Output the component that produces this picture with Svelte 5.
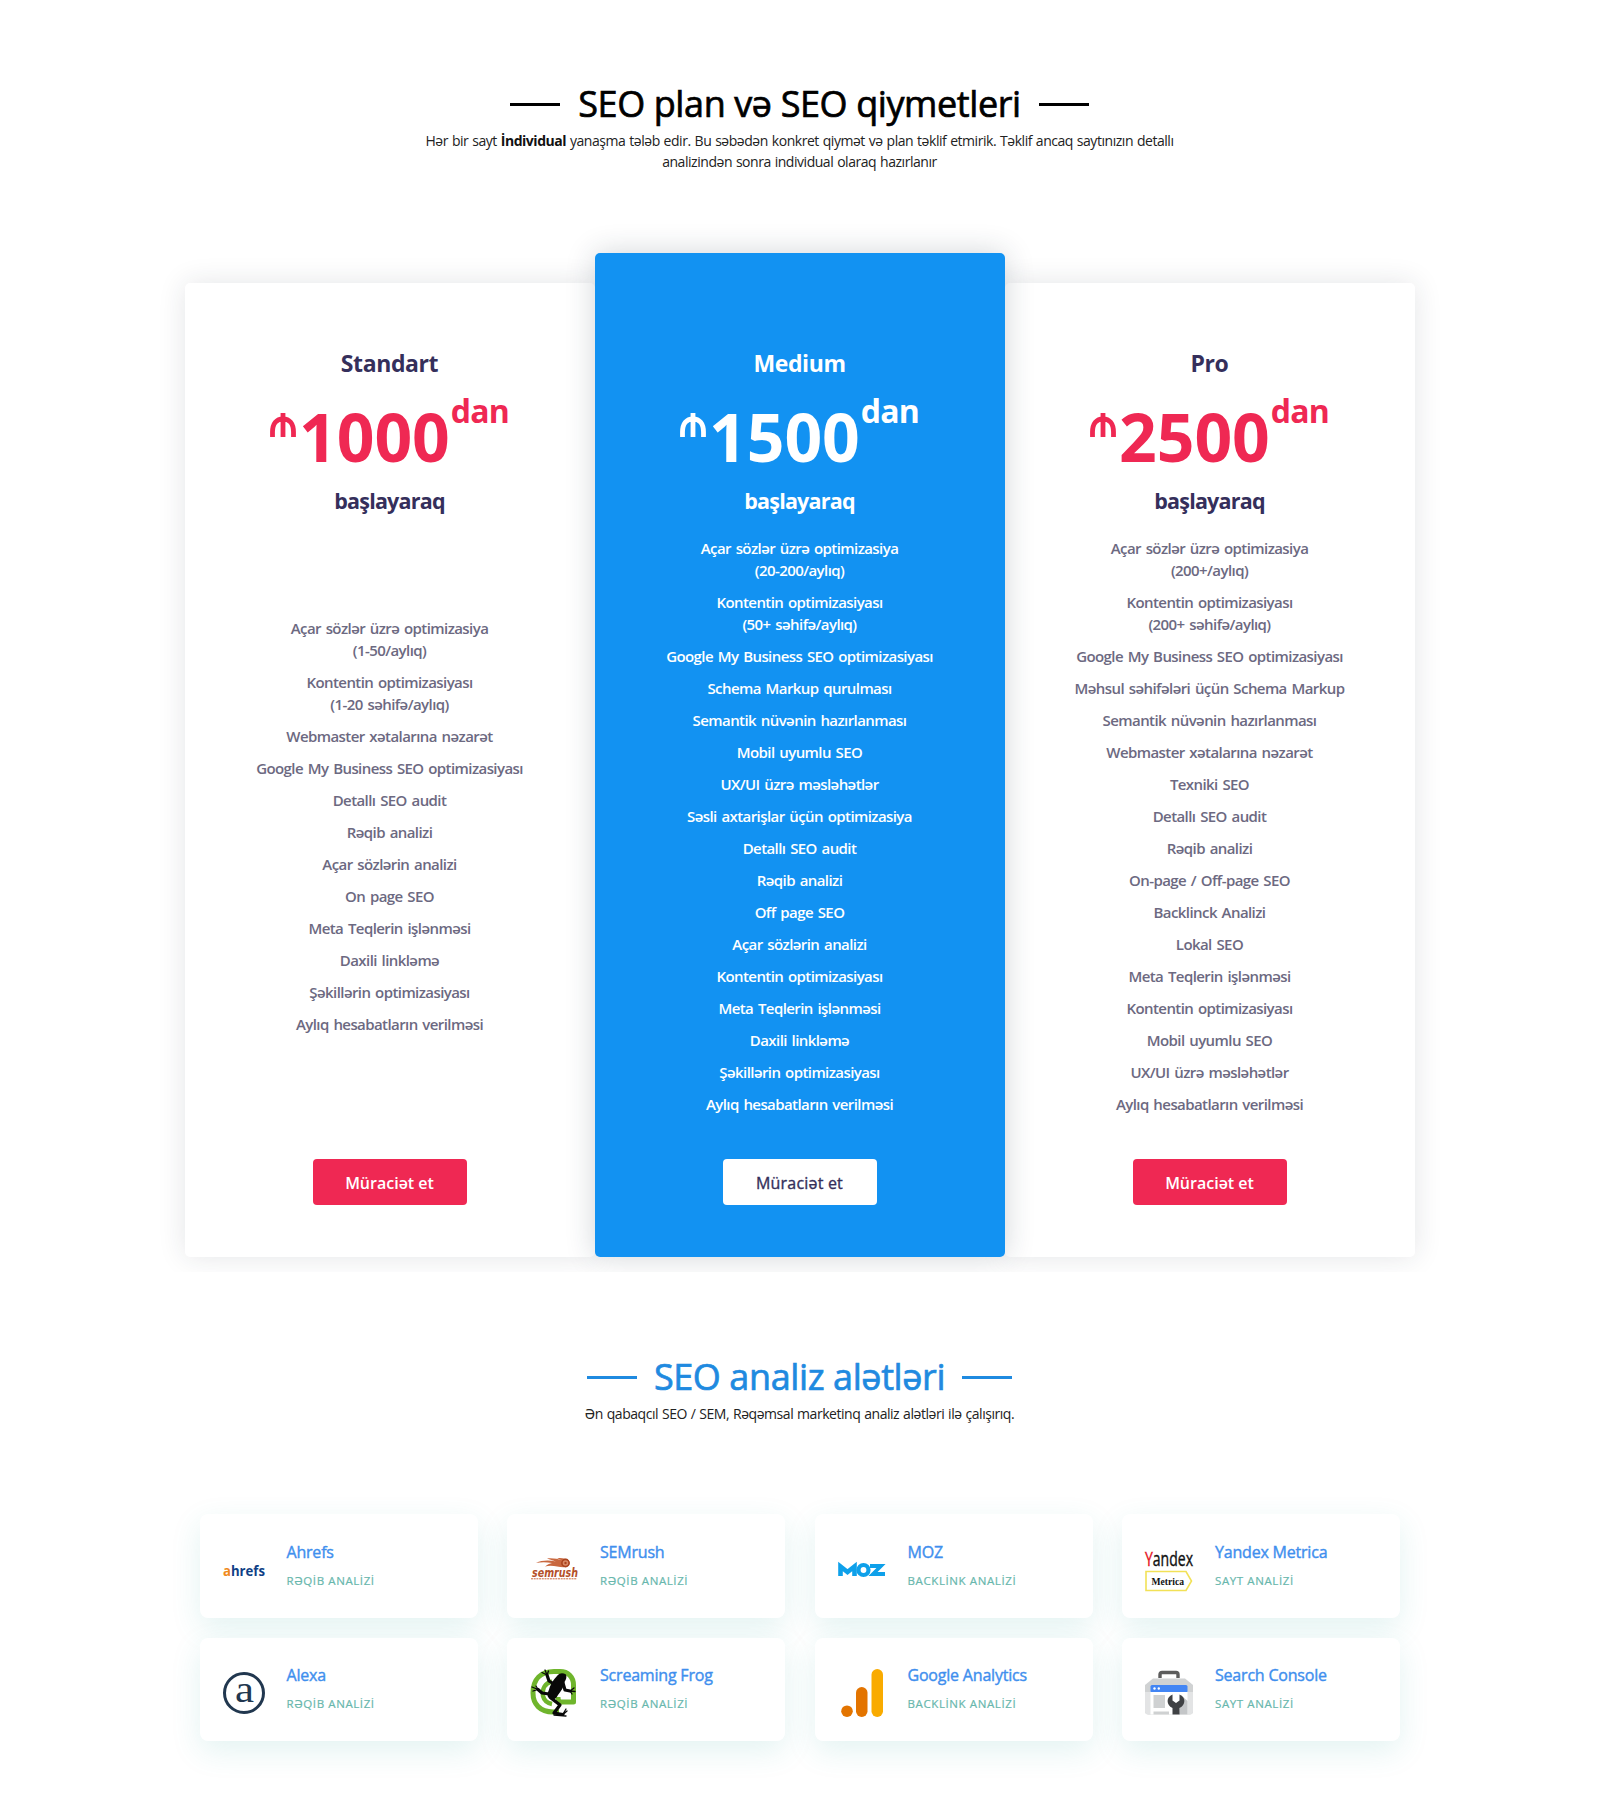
<script>
  const plans = [
    {
      name: 'Standart', price: '1000', kind: 'side',
      items: [
        ['Açar sözlər üzrə optimizasiya', '(1-50/aylıq)'], ['Kontentin optimizasiyası', '(1-20 səhifə/aylıq)'],
        ['Webmaster xətalarına nəzarət'], ['Google My Business SEO optimizasiyası'], ['Detallı SEO audit'],
        ['Rəqib analizi'], ['Açar sözlərin analizi'], ['On page SEO'], ['Meta Teqlerin işlənməsi'],
        ['Daxili linkləmə'], ['Şəkillərin optimizasiyası'], ['Aylıq hesabatların verilməsi']
      ]
    },
    {
      name: 'Medium', price: '1500', kind: 'featured',
      items: [
        ['Açar sözlər üzrə optimizasiya', '(20-200/aylıq)'], ['Kontentin optimizasiyası', '(50+ səhifə/aylıq)'],
        ['Google My Business SEO optimizasiyası'], ['Schema Markup qurulması'], ['Semantik nüvənin hazırlanması'],
        ['Mobil uyumlu SEO'], ['UX/UI üzrə məsləhətlər'], ['Səsli axtarişlar üçün optimizasiya'],
        ['Detallı SEO audit'], ['Rəqib analizi'], ['Off page SEO'], ['Açar sözlərin analizi'],
        ['Kontentin optimizasiyası'], ['Meta Teqlerin işlənməsi'], ['Daxili linkləmə'],
        ['Şəkillərin optimizasiyası'], ['Aylıq hesabatların verilməsi']
      ]
    },
    {
      name: 'Pro', price: '2500', kind: 'side',
      items: [
        ['Açar sözlər üzrə optimizasiya', '(200+/aylıq)'], ['Kontentin optimizasiyası', '(200+ səhifə/aylıq)'],
        ['Google My Business SEO optimizasiyası'], ['Məhsul səhifələri üçün Schema Markup'],
        ['Semantik nüvənin hazırlanması'], ['Webmaster xətalarına nəzarət'], ['Texniki SEO'],
        ['Detallı SEO audit'], ['Rəqib analizi'], ['On-page / Off-page SEO'], ['Backlinck Analizi'],
        ['Lokal SEO'], ['Meta Teqlerin işlənməsi'], ['Kontentin optimizasiyası'], ['Mobil uyumlu SEO'],
        ['UX/UI üzrə məsləhətlər'], ['Aylıq hesabatların verilməsi']
      ]
    }
  ];

  const tools = [
    { id: 'ahrefs', name: 'Ahrefs', note: 'RƏQİB ANALİZİ' },
    { id: 'semrush', name: 'SEMrush', note: 'RƏQİB ANALİZİ' },
    { id: 'moz', name: 'MOZ', note: 'BACKLİNK ANALİZİ' },
    { id: 'yandex', name: 'Yandex Metrica', note: 'SAYT ANALİZİ' },
    { id: 'alexa', name: 'Alexa', note: 'RƏQİB ANALİZİ' },
    { id: 'frog', name: 'Screaming Frog', note: 'RƏQİB ANALİZİ' },
    { id: 'analytics', name: 'Google Analytics', note: 'BACKLİNK ANALİZİ' },
    { id: 'console', name: 'Search Console', note: 'SAYT ANALİZİ' }
  ];
</script>

<main>
  <section class="pricing">
    <header class="intro">
      <h2><span>SEO plan və SEO qiymetleri</span></h2>
      <p>Hər bir sayt <b>İndividual</b> yanaşma tələb edir. Bu səbədən konkret qiymət və plan təklif etmirik. Təklif ancaq saytınızın detallı<br />analizindən sonra individual olaraq hazırlanır</p>
    </header>
    <div class="plans">
      {#each plans as plan}
        <article class="plan {plan.kind}">
          <h3>{plan.name}</h3>
          <div class="price">
            <svg class="manat" viewBox="0 0 26 24"><path d="M2.5 24V19C2.5 10.5 6.5 5.8 13 5.8S23.500 10.500 23.500 19V24M13 0V24" /></svg>
            <span class="amount">{plan.price}</span><span class="dan">dan</span>
          </div>
          <h4>başlayaraq</h4>
          <ul>
            {#each plan.items as lines}
              <li>{#each lines as line}<span>{line}</span>{/each}</li>
            {/each}
          </ul>
          <button>Müraciət et</button>
        </article>
      {/each}
    </div>
  </section>

  <section class="tools">
    <header class="intro blue">
      <h2><span>SEO analiz alətləri</span></h2>
      <p>Ən qabaqcıl SEO / SEM, Rəqəmsal marketinq analiz alətləri ilə çalışırıq.</p>
    </header>
    <div class="grid">
      {#each tools as tool}
        <article class="tool">
          {#if tool.id === 'ahrefs'}
            <svg width="42" height="48" viewBox="0 0 42 48"><text x="0" y="29.500" class="ahrefs" textLength="42" lengthAdjust="spacingAndGlyphs"><tspan fill="#f08a1c">a</tspan><tspan fill="#0f3f86">hrefs</tspan></text></svg>
          {:else if tool.id === 'semrush'}
            <svg width="48" height="48" viewBox="0 0 48 48">
              <path d="M6 17C12 14 19 14 26 15.500L17 12.500C23 12 28 13 32 14.500L27 12C31 12 34 12.500 37 13C41 15 40 20 36 21C29 22 23 18 15 20.500C18 18 20 17.500 22 17C16 16 11 16 6 17Z" fill="#c9683f" />
              <circle cx="35.500" cy="17" r="3.600" fill="#d98a66" stroke="#a9421d" stroke-width="1.600" /><circle cx="35.500" cy="17" r="1.200" fill="#a9421d" />
              <text x="2" y="30.500" class="semrush" textLength="46" lengthAdjust="spacingAndGlyphs">semrush</text>
              <path d="M1 32.800H47" stroke="#c9683f" stroke-width="1" stroke-dasharray="2 .7" />
            </svg>
          {:else if tool.id === 'moz'}
            <svg width="48" height="48" viewBox="0 0 48 48" fill="none" stroke="#0ea0ea">
              <path d="M2.500 30V20.500L9.500 26L16.500 20.500V30" stroke-width="4.600" />
              <circle cx="25.500" cy="24" r="5" stroke-width="4.200" />
              <path d="M32 20H43L35 28H47" stroke-width="3.800" />
            </svg>
          {:else if tool.id === 'yandex'}
            <svg width="48" height="48" viewBox="0 0 48 48">
              <text x="0" y="20" class="yandex" textLength="48" lengthAdjust="spacingAndGlyphs"><tspan fill="#e5131d" stroke="#e5131d">Y</tspan><tspan fill="#111" stroke="#111">andex</tspan></text>
              <path d="M1 25.500H41L46.500 35L41 44.500H1Z" fill="#fff" stroke="#f2e157" stroke-width="1.600" />
              <text x="6.500" y="38.500" class="metrica" textLength="32.500" lengthAdjust="spacingAndGlyphs">Metrica</text>
            </svg>
          {:else if tool.id === 'alexa'}
            <svg width="42" height="48" viewBox="0 0 42 48"><circle cx="21" cy="24" r="19.500" fill="none" stroke="#21374f" stroke-width="3" /><text x="12" y="33" class="alexa" textLength="19" lengthAdjust="spacingAndGlyphs">a</text></svg>
          {:else if tool.id === 'frog'}
            <svg width="48" height="48" viewBox="0 0 48 48">
              <path d="M29 43H23C10 43 3 35 3 24C3 10 11 2.500 24 2.500H30C38 2.500 43.500 8 43.500 16V33H31C29 33 28 31 28 28" fill="none" stroke="#6fb52c" stroke-width="5" stroke-linejoin="round" />
              <path d="M22 12.500C15 14 12 20 13 27C14 31 17 34 22 35" fill="none" stroke="#6fb52c" stroke-width="4.500" />
              <path d="M27 7C30 3.500 33 4 36 5.500C37 8 36 11 34.500 13C34 18 31 22 28 26C26 30 23 31.500 20 30C17 28 17 25 18.500 22C20 16 23 11 27 7Z" fill="#080808" />
              <g fill="none" stroke="#080808" stroke-linecap="round" stroke-linejoin="round">
                <path d="M24 15L19 12L17 6M33 14L35 21L40 22M19 25L12 24L8 20.500M21 29L30 36L24 44L33 45.500" stroke-width="3.200" />
                <path d="M17 6L12 3.500M17 6L15 1M17 6L18.500 2M40 22L44 19M40 22L45 22.500M40 22L42 25M8 20.500L2 18M8 20.500L3 22M8 20.500L6 17M24 46L36 47M33 45.500L37 42M33 45L36 40" stroke-width="1.300" />
              </g>
            </svg>
          {:else if tool.id === 'analytics'}
            <svg width="48" height="48" viewBox="0 0 48 48"><rect x="33.500" y="0" width="11.500" height="48" rx="5.750" fill="#f9ab00" /><rect x="18" y="18" width="11.500" height="30" rx="5.750" fill="#e37400" /><circle cx="9" cy="42.200" r="5.800" fill="#e37400" /></svg>
          {:else}
            <svg width="48" height="48" viewBox="0 0 48 48">
              <path d="M15 9V5.500Q15 3.500 17 3.500H31Q33 3.500 33 5.500V9" fill="none" stroke="#5c5c5c" stroke-width="3.400" />
              <path d="M8 9.500H40L48 16V42Q48 45.500 44.500 45.500H3.500Q0 45.500 0 42V16Z" fill="#d0d2d3" />
              <path d="M0 23H48V42Q48 45.500 44.500 45.500H3.500Q0 45.500 0 42Z" fill="#e3e4e5" />
              <path d="M5.500 22H42.500V45.500H5.500Z" fill="#fff" /><path d="M5.500 17.500Q5.500 16 7 16H41Q42.500 16 42.500 17.500V23H5.500Z" fill="#4285f4" />
              <circle cx="9.500" cy="19.500" r="1.200" fill="#fff" /><circle cx="13.800" cy="19.500" r="1.200" fill="#fff" />
              <path d="M8.500 26H20V39H8.500ZM8.500 42.500H24V45.500H8.500Z" fill="#cfd1d2" />
              <path d="M36 26L42.500 32V45.500H34Z" fill="#c4c6c8" />
              <path d="M27.500 25.500V31.500L31 34L34.500 31.500V25.500C41 28 41 36 34.500 39V45.500H27.500V39C21 36 21 28 27.500 25.500Z" fill="#3f4144" />
            </svg>
          {/if}
          <div class="label"><strong>{tool.name}</strong><small>{tool.note}</small></div>
        </article>
      {/each}
    </div>
  </section>
</main>

<style>
  :global(body) { background: #fff; }
  main { font-family: 'Open Sans', 'Noto Sans', sans-serif; color: #222; height: 1811px; overflow: hidden; }
  h2, h3, h4, p, ul { margin: 0; padding: 0; }
  svg { flex: none; display: block; overflow: visible; }

  .pricing { height: 1272px; box-sizing: border-box; padding-top: 80px; overflow: hidden; }
  .intro { text-align: center; }
  .intro h2 { display: flex; align-items: center; justify-content: center; gap: 18px; height: 48px; font-size: 36px; font-weight: 500; color: #000; white-space: nowrap; letter-spacing: -.4px; -webkit-text-stroke: .7px currentColor; }
  .intro h2 span { padding-bottom: 1px; }
  .intro h2::before, .intro h2::after { content: ''; width: 50px; height: 3px; background: currentColor; }
  .intro p { margin-top: 2px; font-size: 14px; line-height: 21px; letter-spacing: -.46px; word-spacing: .7px; white-space: nowrap; }
  .intro b { color: #111; }
  .intro.blue h2 { color: #1f8ae0; gap: 17px; }

  .plans { display: grid; grid-template-columns: repeat(3, 410px); justify-content: center; align-items: end; margin-top: 81px; }
  .plan { display: flex; flex-direction: column; align-items: center; box-sizing: border-box; height: 974px; padding: 63px 0 52px; border-radius: 5px; background: #fff; color: #352f5b; box-shadow: 0 0 28px rgba(31, 45, 61, .12); }
  .plan.featured { position: relative; height: 1004px; padding-top: 93px; background: #1292f2; color: #fff; box-shadow: 0 0 30px rgba(31, 45, 61, .2); }
  h3 { font-size: 23px; line-height: 34px; font-weight: 700; letter-spacing: -.4px; }
  .price { display: flex; align-items: flex-start; justify-content: center; height: 90px; margin-top: 12px; color: #ef2853; font-weight: 700; }
  .featured .price { color: #fff; }
  .manat { width: 26px; height: 24px; margin: 21px 3px 0 0; fill: none; stroke: currentColor; stroke-width: 4.800; }
  .amount { font-size: 66px; line-height: 88px; }
  .dan { font-size: 32px; line-height: 37px; letter-spacing: -.8px; margin-left: 1px; }
  h4 { font-size: 21.500px; line-height: 30px; font-weight: 700; margin-top: 4px; letter-spacing: -.8px; }
  ul { display: flex; flex-direction: column; justify-content: center; gap: 10px; height: 588px; margin: 16px 0 auto; list-style: none; text-align: center; font-size: 15px; line-height: 22px; font-weight: 600; color: #6c6981; letter-spacing: -.58px; word-spacing: 1.400px; }
  .featured ul { color: #fff; }
  li span { display: block; white-space: nowrap; }
  button { width: 154px; height: 46px; padding: 2px 0 0; border: 0; border-radius: 4px; background: #ef2853; color: #fff; font: 600 16px 'Open Sans', sans-serif; }
  .featured button { background: #fff; color: #352f5b; font-weight: 400; letter-spacing: .2px; -webkit-text-stroke: .35px currentColor; }

  .tools { padding-top: 81px; }
  .grid { display: grid; grid-template-columns: repeat(4, 278px); column-gap: 29.500px; row-gap: 20px; justify-content: center; margin-top: 90px; padding-left: .5px; }
  .tool { display: flex; align-items: center; gap: 22px; box-sizing: border-box; height: 103.500px; padding: 8px 23px 0; border-radius: 8px; background: #fff; box-shadow: 0 10px 30px rgba(38, 166, 154, .13); }
  .label { display: flex; flex-direction: column; gap: 9px; margin-top: -9px; }
  .label strong { font-size: 16px; line-height: 22px; font-weight: 400; color: #3f8fee; letter-spacing: -.2px; -webkit-text-stroke: .4px currentColor; }
  .label small { font-size: 11.500px; line-height: 18px; letter-spacing: .6px; color: #68b7ad; -webkit-text-stroke: .2px currentColor; }
  .ahrefs { font: 700 14px 'Open Sans', sans-serif; }
  .semrush { font: italic 700 11.500px 'DejaVu Sans', sans-serif; fill: #b4502a; }
  .yandex { font: 20px 'Open Sans', sans-serif; stroke-width: .4px; }
  .metrica { font: 700 10px 'Liberation Serif', serif; fill: #111; }
  .alexa { font: 37px 'Liberation Serif', serif; fill: #21374f; }
</style>
